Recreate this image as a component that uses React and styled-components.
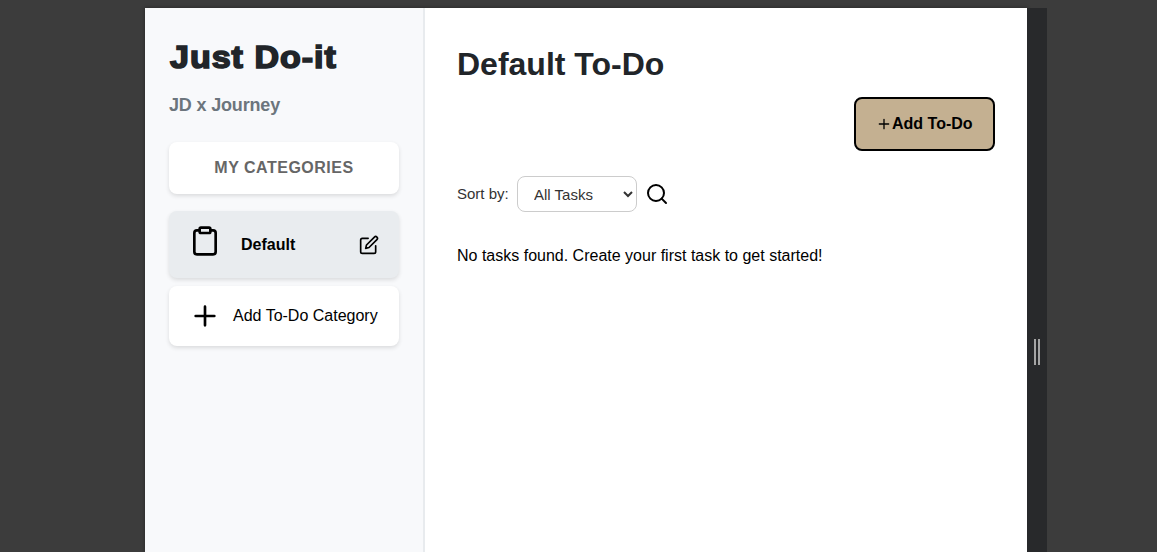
import React from "react";
import styled, { createGlobalStyle } from "styled-components";

const GlobalStyle = createGlobalStyle`
  * { box-sizing: border-box; }
  body {
    margin: 0;
    background: #3c3c3c;
    font-family: "Liberation Sans", Arial, sans-serif;
    font-size: 16px;
    color: #000;
    overflow: hidden;
  }
`;

const Stage = styled.div`
  height: 552px;
  padding: 8px 110px 0 145px;
  display: flex;
`;

const Viewport = styled.div`
  width: 882px;
  display: flex;
  background: #fff;
  box-shadow: 0 0 4px rgba(0, 0, 0, 0.4);
`;

const Resizer = styled.div`
  position: relative;
  width: 20px;
  display: flex;
  justify-content: center;
  gap: 2px;
  padding-top: 331px;
  background: #28292b;
`;

const Grip = styled.span`
  width: 2px;
  height: 26px;
  background: #a5a5a5;
`;

const Sidebar = styled.aside`
  width: 280px;
  flex: none;
  padding: 30px 24px 0;
  background: #f8f9fb;
  border-right: 2px solid #e8ebee;
`;

const Brand = styled.h1`
  margin: 0 0 0 1px;
  font-size: 31px;
  line-height: 40px;
  font-weight: 900;
  letter-spacing: 0.9px;
  white-space: nowrap;
  color: #212529;
  -webkit-text-stroke: 1.6px #212529;
  transform: scaleX(1.098);
  transform-origin: left center;
`;

const Tagline = styled.p`
  margin: 16px 0 0;
  font-size: 18px;
  line-height: 22px;
  font-weight: 700;
  letter-spacing: -0.17px;
  color: #6c757d;
`;

const Card = styled.div`
  width: 230px;
  height: ${(p) => p.$height}px;
  margin-top: ${(p) => p.$top}px;
  padding: 0 20px;
  display: flex;
  align-items: center;
  border-radius: 8px;
  background: ${(p) => (p.$active ? "#e9ecef" : "#fff")};
  box-shadow: 0 2px 4px rgba(0, 0, 0, 0.12);
`;

const CategoryHeading = styled.h2`
  flex: 1;
  margin: 0;
  text-align: center;
  font-size: 16px;
  line-height: 18px;
  letter-spacing: 0.5px;
  color: #666;
`;

const CategoryIcon = styled.span`
  display: flex;
  padding-bottom: ${(p) => p.$lift || 0}px;
`;

const CategoryName = styled.span`
  flex: 1;
  margin-left: ${(p) => p.$gap}px;
  font-weight: ${(p) => (p.$bold ? 700 : 400)};
  white-space: nowrap;
`;

const Main = styled.main`
  flex: 1;
  padding: 36px 32px 0;
  display: flex;
  flex-direction: column;
`;

const Title = styled.h2`
  margin: 0;
  font-size: 32px;
  line-height: 40px;
  color: #212529;
`;

const AddButton = styled.button`
  align-self: flex-end;
  width: 141px;
  height: 54px;
  margin-top: 13px;
  padding: 0 0 0 20px;
  display: flex;
  align-items: center;
  border: 2px solid #000;
  border-radius: 8px;
  background: #c4b091;
  color: #000;
  font: 700 16px "Liberation Sans", Arial, sans-serif;
  white-space: nowrap;
`;

const SortBar = styled.div`
  margin-top: 25px;
  height: 36px;
  display: flex;
  align-items: center;
`;

const SortLabel = styled.label`
  width: 60px;
  padding-bottom: 2px;
  font-size: 15px;
  color: #333;
`;

const SortSelect = styled.select`
  width: 120px;
  height: 36px;
  margin-right: 8px;
  padding: 0 0 0 12px;
  border: 1px solid #ccc;
  border-radius: 8px;
  background: #fff;
  color: #333;
  font: 15px "Liberation Sans", Arial, sans-serif;
`;

const EmptyMessage = styled.p`
  margin: 35px 0 0;
  line-height: 18px;
`;

function Icon({ size, stroke = 2, children }) {
  return (
    <svg
      width={size}
      height={size}
      viewBox="0 0 24 24"
      fill="none"
      stroke="currentColor"
      strokeWidth={stroke}
      strokeLinecap="round"
      strokeLinejoin="round"
    >
      {children}
    </svg>
  );
}

const PlusShape = () => <path d="M12 5v14M5 12h14" />;

export default function App() {
  return (
    <>
      <GlobalStyle />
      <Stage>
        <Viewport>
          <Sidebar>
            <Brand>Just Do-it</Brand>
            <Tagline>JD x Journey</Tagline>
            <Card $height={52} $top={26}>
              <CategoryHeading>MY CATEGORIES</CategoryHeading>
            </Card>
            <Card $height={67} $top={17} $active>
              <CategoryIcon $lift={8}>
                <Icon size={32}>
                  <path d="M16 4h2a2 2 0 0 1 2 2v14a2 2 0 0 1-2 2H6a2 2 0 0 1-2-2V6a2 2 0 0 1 2-2h2" />
                  <rect x="8" y="2" width="8" height="4" rx="1" ry="1" />
                </Icon>
              </CategoryIcon>
              <CategoryName $gap={20} $bold>Default</CategoryName>
              <Icon size={20}>
                <path d="M11 4H4a2 2 0 0 0-2 2v14a2 2 0 0 0 2 2h14a2 2 0 0 0 2-2v-7" />
                <path d="M18.5 2.5a2.121 2.121 0 0 1 3 3L12 15l-4 1 1-4 9.5-9.5z" />
              </Icon>
            </Card>
            <Card $height={60} $top={8}>
              <CategoryIcon>
                <Icon size={32}><PlusShape /></Icon>
              </CategoryIcon>
              <CategoryName $gap={12}>Add To-Do Category</CategoryName>
            </Card>
          </Sidebar>
          <Main>
            <Title>Default To-Do</Title>
            <AddButton>
              <Icon size={16}><PlusShape /></Icon>
              Add To-Do
            </AddButton>
            <SortBar>
              <SortLabel htmlFor="sort">Sort by:</SortLabel>
              <SortSelect id="sort">
                <option>All Tasks</option>
              </SortSelect>
              <Icon size={24}>
                <circle cx="11" cy="11" r="8" />
                <path d="m21 21-4.35-4.35" />
              </Icon>
            </SortBar>
            <EmptyMessage>No tasks found. Create your first task to get started!</EmptyMessage>
          </Main>
        </Viewport>
        <Resizer>
          <Grip />
          <Grip />
        </Resizer>
      </Stage>
    </>
  );
}
